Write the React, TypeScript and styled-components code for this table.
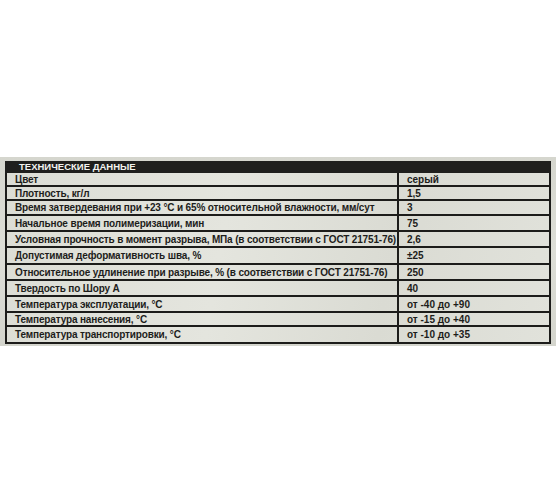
import styled, { createGlobalStyle } from "styled-components";

const Global = createGlobalStyle`
  html, body {
    margin: 0;
    padding: 0;
    background: #ffffff;
  }
`;

type Row = { name: string; value: string; h: number };

const rows: Row[] = [
  { name: "Цвет", value: "серый", h: 14 },
  { name: "Плотность, кг/л", value: "1,5", h: 14 },
  { name: "Время затвердевания при +23 °C и 65% относительной влажности, мм/сут", value: "3", h: 15 },
  { name: "Начальное время полимеризации, мин", value: "75", h: 16 },
  { name: "Условная прочность в момент разрыва, МПа (в соответствии с ГОСТ 21751-76)", value: "2,6", h: 16 },
  { name: "Допустимая деформативность шва, %", value: "±25", h: 17 },
  { name: "Относительное удлинение при разрыве, % (в соответствии с ГОСТ 21751-76)", value: "250", h: 16 },
  { name: "Твердость по Шору А", value: "40", h: 16 },
  { name: "Температура эксплуатации, °С", value: "от -40 до +90", h: 16 },
  { name: "Температура нанесения, °С", value: "от -15 до +40", h: 14 },
  { name: "Температура транспортировки, °С", value: "от -10 до +35", h: 15 },
];

const App = () => {
  return (
    <>
      <Global />
      <Page>
        <Label>
          <Table>
            <Header>ТЕХНИЧЕСКИЕ ДАННЫЕ</Header>
            {rows.map((r, i) => (
              <TableRow key={r.name} $h={r.h} $last={i === rows.length - 1}>
                <NameCell>{r.name}</NameCell>
                <ValueCell>{r.value}</ValueCell>
              </TableRow>
            ))}
          </Table>
        </Label>
      </Page>
    </>
  );
};

export default App;

const Page = styled.div`
  width: 560px;
  height: 504px;
  padding-top: 157px;
  box-sizing: border-box;
  background: #ffffff;
`;

const Label = styled.div`
  width: 556px;
  height: 189px;
  box-sizing: border-box;
  padding: 4px 5px 0 5px;
  background: linear-gradient(180deg, #d5d6ce 0%, #dddED7 50%, #d4d5cd 100%);
`;

const Table = styled.div`
  width: 546px;
  border: 2px solid #1c1c1a;
  border-top: none;
  box-sizing: border-box;
  background: linear-gradient(100deg, #dcddd5 0%, #e4e5de 40%, #dadbd3 70%, #e1e2db 100%);
  font-family: "Liberation Sans", Arial, sans-serif;
  font-weight: 700;
  color: #1d1d1b;
`;

const Header = styled.div`
  height: 12px;
  margin: 0 -2px;
  padding-left: 14px;
  background: #1f1f1d;
  color: #f2f2ee;
  font-size: 9.5px;
  line-height: 12px;
`;

const TableRow = styled.div<{ $h: number; $last: boolean }>`
  display: grid;
  grid-template-columns: 392px 1fr;
  height: ${(p) => p.$h}px;
  box-sizing: border-box;
  border-bottom: ${(p) => (p.$last ? "none" : "2px solid #1c1c1a")};
  font-size: 10px;
`;

const NameCell = styled.div`
  display: flex;
  align-items: center;
  padding-left: 8px;
  border-right: 2px solid #1c1c1a;
  white-space: nowrap;
  letter-spacing: -0.15px;
`;

const ValueCell = styled.div`
  display: flex;
  align-items: center;
  padding-left: 8px;
  white-space: nowrap;
`;
